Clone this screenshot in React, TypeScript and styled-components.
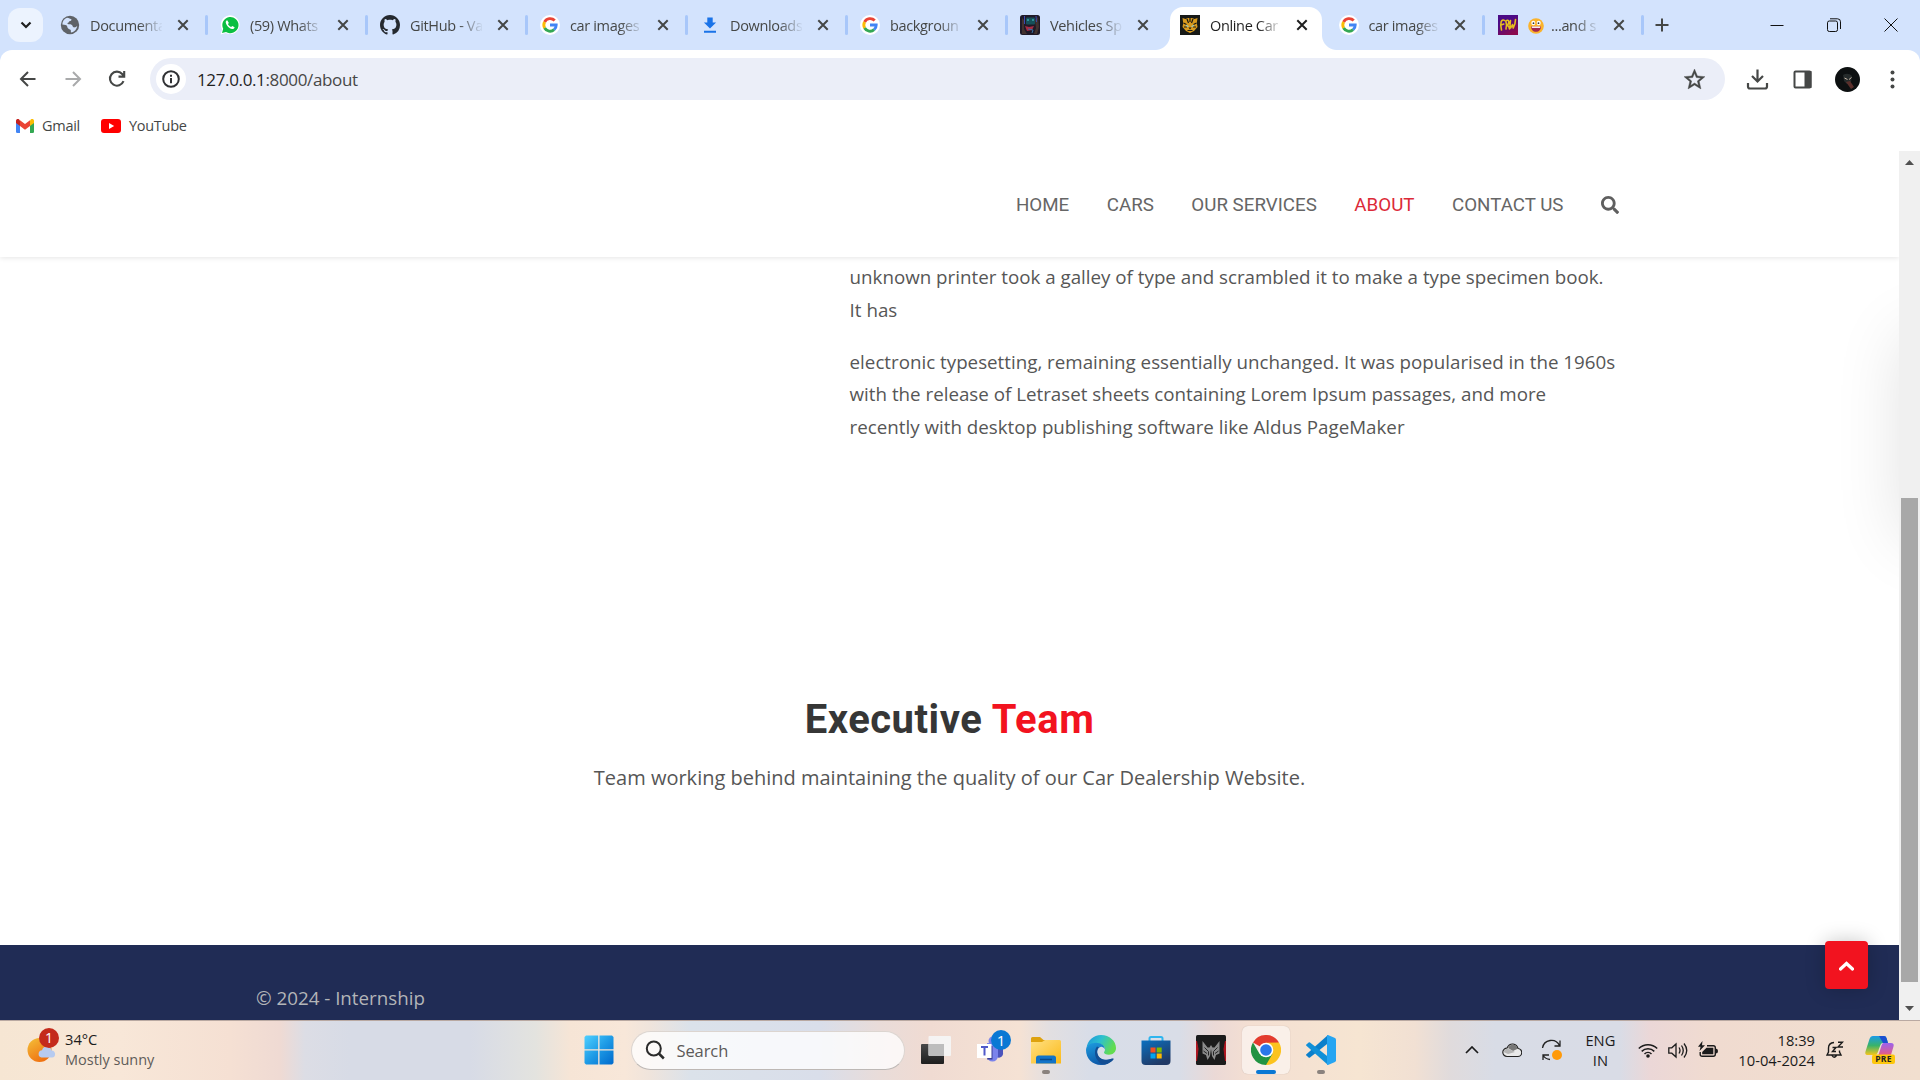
import React from "react";
import styled, { createGlobalStyle, css } from "styled-components";

const Global = createGlobalStyle`
  * { box-sizing: border-box; }
  html, body { margin: 0; padding: 0; background: #fff; overflow: hidden; }
  svg { display: block; flex: none; }
`;

const ui = `"Segoe UI", "Open Sans", "Noto Sans", sans-serif`;

const Screen = styled.div`
  width: 1920px;
  height: 1080px;
  display: flex;
  flex-direction: column;
  overflow: hidden;
  font-family: ${ui};
  color: #454746;
`;

/* ---------- tab strip ---------- */
const TabStrip = styled.div`
  height: 50px;
  flex: none;
  display: flex;
  align-items: stretch;
  background: #d3e3fd;
  padding-left: 8px;
`;
const TabSearch = styled.div`
  width: 35px;
  height: 34px;
  margin: 8px 3px 0 0;
  border-radius: 12px;
  background: #ecf3fe;
  display: flex;
  align-items: center;
  justify-content: center;
`;
const Tab = styled.div<{ $active?: boolean; $w: number }>`
  position: relative;
  width: ${(p) => p.$w}px;
  height: 50px;
  display: flex;
  align-items: center;
  padding-left: 14px;
  z-index: ${(p) => (p.$active ? 1 : 0)};
  ${(p) =>
    p.$active &&
    css`
      &::before {
        content: "";
        position: absolute;
        z-index: -1;
        left: 4px;
        right: 3px;
        top: 7px;
        bottom: 0;
        background: #fff;
        border-radius: 13px 13px 0 0;
      }
      &::after {
        content: "";
        position: absolute;
        z-index: -1;
        left: -11px;
        right: -12px;
        bottom: 0;
        height: 15px;
        background: radial-gradient(circle at 0 0, transparent 14.5px, #fff 15.5px) left / 15px 15px no-repeat,
          radial-gradient(circle at 100% 0, transparent 14.5px, #fff 15.5px) right / 15px 15px no-repeat;
      }
    `}
`;
const Favicon = styled.div`
  width: 20px;
  height: 20px;
  margin-right: 10px;
  flex: none;
`;
const TabTitle = styled.div<{ $active?: boolean; $w: number }>`
  width: ${(p) => p.$w}px;
  flex: none;
  white-space: nowrap;
  font-size: 14.5px;
  letter-spacing: -0.35px;
  line-height: 22px;
  padding-top: 2px;
  color: ${(p) => (p.$active ? "#1f1f1f" : "#454746")};
  mask-image: linear-gradient(90deg, #000 68%, transparent 102%);
`;
const TabClose = styled.div`
  margin-left: 14px;
  flex: none;
`;
const Separator = styled.div`
  width: 3px;
  height: 20px;
  margin-left: 15px;
  flex: none;
  border-radius: 2px;
  background: #a8c7fa;
`;
const NewTab = styled.div`
  display: flex;
  align-items: center;
  margin-left: 13px;
`;
const WindowButtons = styled.div`
  margin-left: auto;
  display: flex;
  align-items: center;
  gap: 43px;
  padding: 0 22px 1px 0;
`;

/* ---------- toolbar ---------- */
const ToolbarBack = styled.div`
  background: #d3e3fd;
  flex: none;
`;
const Toolbar = styled.div`
  height: 55px;
  background: #fff;
  border-radius: 12px 12px 0 0;
  display: flex;
  align-items: center;
  padding: 3px 0 0 18px;
`;
const NavIcons = styled.div`
  display: flex;
  gap: 24.5px;
  width: 132px;
`;
const Omnibox = styled.div`
  width: 1575px;
  height: 42px;
  border-radius: 21px;
  background: #ebeef8;
  display: flex;
  align-items: center;
  padding: 0 18px 0 6px;
`;
const SiteInfo = styled.div`
  width: 30px;
  height: 30px;
  border-radius: 50%;
  background: #fff;
  display: flex;
  align-items: center;
  justify-content: center;
  margin-right: 11px;
`;
const Url = styled.div`
  flex: 1;
  font-size: 17px;
  letter-spacing: -0.36px;
  color: #474747;
  span { color: #1f1f1f; }
`;
const ToolbarActions = styled.div`
  display: flex;
  align-items: center;
  gap: 20px;
  margin-left: 20px;
`;
const Bookmarks = styled.div`
  height: 46px;
  flex: none;
  display: flex;
  align-items: center;
  padding: 0 0 5px 16px;
`;
const Bookmark = styled.div`
  display: flex;
  align-items: center;
  gap: 8px;
  margin-right: 21px;
  font-size: 14.5px;
  letter-spacing: -0.28px;
`;

/* ---------- page ---------- */
const Viewport = styled.div`
  height: 869px;
  flex: none;
  display: flex;
`;
const Page = styled.div`
  position: relative;
  width: 1899px;
  overflow: hidden;
  display: flex;
  flex-direction: column;
`;
const SiteHeader = styled.header`
  height: 106px;
  flex: none;
  display: flex;
  align-items: center;
  justify-content: flex-end;
  padding: 2px 280px 0 0;
  background: #fff;
  box-shadow: 0 1px 5px rgba(0, 0, 0, 0.1);
`;
const Menu = styled.nav`
  display: flex;
  align-items: center;
  gap: 37.5px;
`;
const MenuLink = styled.a<{ $active?: boolean }>`
  font: 400 18.75px/24px Roboto, sans-serif;
  color: ${(p) => (p.$active ? "#dc2a38" : "#666")};
  white-space: nowrap;
`;
const Copy = styled.section`
  width: 770px;
  margin: 4px 0 0 849.6px;
  height: 402px;
  p {
    margin: 0 0 19.5px;
    font: 400 18.75px/32.5px "Open Sans", sans-serif;
    color: #565656;
  }
`;
const Team = styled.section`
  flex: 1;
  text-align: center;
  padding-top: 31px;
`;
const TeamTitle = styled.h2`
  margin: 0;
  font: 700 40px/52px Roboto, sans-serif;
  letter-spacing: 0.5px;
  color: #363636;
  span { color: #f2131f; }
`;
const TeamText = styled.p`
  margin: 16px 0 0;
  font: 400 20px/32px "Open Sans", sans-serif;
  color: #565656;
`;
const Footer = styled.footer`
  height: 75px;
  flex: none;
  padding: 36px 0 0 256px;
  background: #202c55;
  font: 400 18.75px/34px "Open Sans", sans-serif;
  color: #b3b5b8;
`;
const DrawerShadow = styled.div`
  position: absolute;
  left: 1902px;
  top: 184px;
  width: 200px;
  height: 205px;
  box-shadow: 0 0 64px rgba(0, 0, 0, 0.12);
`;
const BackToTop = styled.div`
  position: absolute;
  left: 1825px;
  top: 790px;
  width: 43px;
  height: 48px;
  border-radius: 4px;
  background: #f2131f;
  box-shadow: 0 0 20px rgba(0, 0, 0, 0.22);
  display: flex;
  align-items: center;
  justify-content: center;
  padding-top: 2px;
`;
const ScrollTrack = styled.div`
  width: 21px;
  background: #f0f0f0;
  display: flex;
  flex-direction: column;
  align-items: center;
  padding-top: 9px;
`;
const ScrollThumb = styled.div`
  width: 17px;
  height: 484px;
  margin: 333px 0 24px;
  background: #a8a8a8;
`;

/* ---------- taskbar ---------- */
const Taskbar = styled.div`
  height: 60px;
  flex: none;
  display: flex;
  align-items: center;
  padding-bottom: 1px;
  border-top: 1px solid #b9a9a2;
  background: linear-gradient(
    90deg,
    #f6e6d3 0, #f8e7d8 120px, #f5e0d3 230px, #efdad3 280px, #dcdde5 305px, #d7dbe6 350px, #d7dbe6 470px,
    #e3e3df 535px, #f6e5d6 570px, #f8e7d9 625px, #efe4dc 650px, #dbe2ea 690px, #d9deea 820px, #e9dcd9 880px,
    #f0dbd2 930px, #f5e2d4 1020px, #e2dfe1 1050px, #d8dde8 1090px, #d9dde7 1180px, #ebd9d6 1215px, #f4dfd2 1250px, #f6e5d2 1360px,
    #f1e0d3 1415px, #e0dbdc 1450px, #d8dce6 1495px, #d9dce6 1620px, #ebd7d7 1650px, #f0dbd0 1710px, #f1dfcf 1920px
  );
`;
const Weather = styled.div`
  display: flex;
  width: 584px;
  padding: 0 0 1px 27px;
  gap: 4px;
  align-items: center;
`;
const Lines = styled.div<{ $align?: string }>`
  font-size: 14.7px;
  line-height: 20px;
  text-align: ${(p) => p.$align || "left"};
  color: #1b1b1b;
  white-space: nowrap;
  em { font-style: normal; font-size: 14.5px; color: #5f5c59; }
`;
const SearchBox = styled.div`
  width: 274px;
  height: 39px;
  margin: 0 3px 0 17px;
  border-radius: 20px;
  border: 1px solid #dcd5d0;
  border-bottom-color: #bdb8b5;
  background: rgba(255, 255, 255, 0.78);
  display: flex;
  align-items: center;
  gap: 11.5px;
  padding-left: 13px;
  font-size: 16.5px;
  letter-spacing: -0.1px;
  color: #5c5a59;
`;
const Slot = styled.div`
  width: 55px;
  height: 58px;
  display: flex;
  align-items: center;
  justify-content: center;
`;
const Tile = styled.div<{ $open?: boolean; $current?: boolean }>`
  position: relative;
  width: 48px;
  height: 48px;
  border-radius: 6px;
  display: flex;
  align-items: center;
  justify-content: center;
  background: ${(p) => (p.$current ? "rgba(255,255,255,.5)" : "none")};
  box-shadow: ${(p) => (p.$current ? "0 0 1px rgba(0,0,0,.25)" : "none")};
  &::after {
    content: "";
    display: ${(p) => (p.$open || p.$current ? "block" : "none")};
    position: absolute;
    bottom: 0;
    width: ${(p) => (p.$current ? 20 : 8)}px;
    height: 4px;
    border-radius: 2px;
    background: ${(p) => (p.$current ? "#0a78d4" : "#8a827e")};
  }
`;
const TeamsSlot = styled(Slot)`
  padding: 0 0 6px 7px;
`;
const Tray = styled.div`
  margin-left: auto;
  display: flex;
  align-items: center;
  padding-right: 25px;
`;
const Spacer = styled.div<{ $w: number }>`
  width: ${(p) => p.$w}px;
  flex: none;
`;

/* ---------- icons ---------- */
const Cross = ({ c = "#454746" }: { c?: string }) => (
  <svg width="14" height="14" viewBox="0 0 14 14" stroke={c} strokeWidth="2">
    <path d="M2.300 2.300l9.400 9.400M11.700 2.300L2.300 11.700" />
  </svg>
);
const Globe = () => (
  <svg width="20" height="20" viewBox="0 0 20 20">
    <circle cx="10" cy="10" r="9.200" fill="#5f6368" />
    <path d="M7 2.700c2 .2 2.300 1 4 1.200 1 .2.4 2-.8 2.100-1.500.1-1 1.500-2.200 1.800-1 .3-.6 1.600.6 1.500 2-.2 3.600.3 4 1.800.4 1.600 1.500 1.400 2.600 1.200 1-.2 1.800-1 2-1.500-.2 3-2.600 6.400-6.200 6.800-.4-1.200 .4-2.200-.8-3-1.400-.8-2.800-1-3-3.200-.1-1.400-2.600-1.500-4.900-1.800C2.400 6.200 4.200 3.700 7 2.700z" fill="#d3e3fd" />
  </svg>
);
const WhatsApp = () => (
  <svg width="20" height="20" viewBox="0 0 20 20">
    <path d="M.6 19.400l1.400-5A9.400 9.400 0 1 1 5.700 18z" fill="#fff" />
    <path d="M2 18l1.200-4.200A8.100 8.100 0 1 1 6 16.900z" fill="#0bbf42" />
    <path d="M7.200 5.300c-.9.300-1.700 1.200-1.400 2.500.6 2.800 3.300 5.700 6.300 6.200 1.300.2 2.400-.7 2.500-1.800l-2.300-1.300-1.200 1.200c-1.500-.6-2.500-1.600-3.200-3l1-1.200z" fill="#fff" />
  </svg>
);
const GitHub = () => (
  <svg width="20" height="20" viewBox="0 0 16 16">
    <path fill="#24292f" d="M8 0C3.580 0 0 3.580 0 8c0 3.540 2.290 6.530 5.470 7.590.4.070.55-.17.55-.38 0-.19-.01-.82-.01-1.490-2.010.37-2.530-.49-2.690-.94-.09-.23-.48-.94-.82-1.130-.28-.15-.68-.52-.01-.53.63-.01 1.080.58 1.230.82.72 1.210 1.870.87 2.330.66.07-.52.28-.87.51-1.070-1.780-.2-3.640-.89-3.640-3.950 0-.87.31-1.590.82-2.150-.08-.2-.36-1.020.08-2.120 0 0 .67-.21 2.200.82.64-.18 1.320-.27 2-.27s1.360.09 2 .27c1.530-1.040 2.200-.82 2.200-.82.44 1.100.16 1.920.08 2.120.51.56.82 1.270.82 2.150 0 3.070-1.870 3.750-3.650 3.950.29.25.54.73.54 1.480 0 1.070-.01 1.930-.01 2.200 0 .21.15.46.55.38A8.010 8.010 0 0 0 16 8c0-4.420-3.580-8-8-8z" />
  </svg>
);
const Google = () => (
  <svg width="20" height="20" viewBox="0 0 20 20" fill="none" strokeWidth="2.900">
    <circle cx="10" cy="10" r="10" fill="#fff" />
    <path d="M14.700 5.600A6.200 6.200 0 0 0 4.600 7" stroke="#ea4335" />
    <path d="M4.600 7a6.300 6.300 0 0 0 0 6" stroke="#fbbc05" />
    <path d="M4.600 13a6.200 6.200 0 0 0 9.500 1.700" stroke="#34a853" />
    <path d="M14.100 14.700A6 6 0 0 0 16.200 10H10" stroke="#4285f4" />
  </svg>
);
const DownloadFav = () => (
  <svg width="20" height="20" viewBox="0 0 20 20" fill="#1a73e8">
    <path d="M7.300 2.500h5.400v5h3.400L10 13.600 3.900 7.500h3.400zM4 15.700h12v2H4z" />
  </svg>
);
const Robot = () => (
  <svg width="20" height="20" viewBox="0 0 20 20">
    <rect width="20" height="20" rx="2.500" fill="#1f1a28" />
    <path d="M2 3l2 2v9l3 5H2zM18 2l-3 3 1 8-2 6h3l2-7z" fill="#43322f" />
    <rect x="6" y="2.500" width="9" height="7" rx="1" fill="#16505a" />
    <path d="M7 5h2M12 5h2" stroke="#3aa2a8" strokeWidth="1.300" />
    <path d="M4.500 1v8M16 1l.5 6" stroke="#3b4ab0" strokeWidth="1" />
    <path d="M5 11l4 1 5-1-2 4-5 1z" fill="#a72c43" />
    <path d="M8 14l5 1-1 3" stroke="#386fa0" fill="none" />
  </svg>
);
const Tiger = () => (
  <svg width="20" height="20" viewBox="0 0 20 20">
    <rect width="20" height="20" fill="#171917" />
    <path d="M2.500 3l3 1L8 3h4l2.500 1 3-1-.7 5 .7 4-3.500 4L10 18l-4-2-3.500-4 .7-4z" fill="#d99a1d" />
    <path d="M7 4l1.500 4M13 4l-1.500 4M10 3v4M3.500 8l3 1.500M16.500 8l-3 1.500M4 12l3 0M16 12l-3 0M7.500 15.500h5" stroke="#171917" strokeWidth="1.200" />
    <path d="M6 10.500l2.500 1M14 10.500l-2.500 1" stroke="#8fd0d8" strokeWidth="1.200" />
    <path d="M8.500 12.500h3L10 14.500z" fill="#171917" />
  </svg>
);
const Graffiti = () => (
  <svg width="20" height="20" viewBox="0 0 20 20">
    <defs>
      <linearGradient id="gr" x1="0" y1="0" x2=".6" y2="1">
        <stop offset=".4" stopColor="#4b0a86" />
        <stop offset="1" stopColor="#8a0a4e" />
      </linearGradient>
    </defs>
    <rect width="20" height="20" fill="url(#gr)" />
    <path d="M3.500 15Q2 10 3.200 6.500Q5 4 6.500 5.500M3 10l2.800-1M8 14Q9 9 7.800 6c3-2.500 4.500 2 1 4.500 1.500 0 2.500 1.500 2.700 3.500M12.500 5.500Q11.500 10 12.700 13l1.800-3.500.7 3.500Q17.500 9 17.500 4.500" fill="none" stroke="#e6bf1e" strokeWidth="1.600" strokeLinejoin="round" strokeLinecap="round" />
  </svg>
);
const Grin = styled.svg`
  display: inline-block;
  vertical-align: -3px;
  margin-right: 7px;
`;
const GrinFace = () => (
  <Grin width="16" height="16" viewBox="0 0 16 16">
    <circle cx="8" cy="8" r="7.800" fill="#fbb32c" />
    <ellipse cx="5.300" cy="5" rx="2" ry="2.300" fill="#fff" />
    <ellipse cx="10.700" cy="5" rx="2" ry="2.300" fill="#fff" />
    <circle cx="5.500" cy="5.200" r=".9" fill="#333" />
    <circle cx="10.500" cy="5.200" r=".9" fill="#333" />
    <path d="M3 8.500h10c0 3-2 5.300-5 5.300s-5-2.300-5-5.300z" fill="#a3264d" />
    <path d="M3.800 8.500h8.400v1.400H3.800z" fill="#fff" />
  </Grin>
);

type TabData = { icon: React.ReactNode; title: React.ReactNode; w?: number; tw?: number; active?: boolean; bar?: boolean };
const tabs: TabData[] = [
  { icon: <Globe />, title: "Documenta", bar: true },
  { icon: <WhatsApp />, title: "(59) Whats", bar: true },
  { icon: <GitHub />, title: "GitHub - Va", bar: true },
  { icon: <Google />, title: "car images", bar: true },
  { icon: <DownloadFav />, title: "Downloads", bar: true },
  { icon: <Google />, title: "backgroun", bar: true },
  { icon: <Robot />, title: "Vehicles Sp" },
  { icon: <Tiger />, title: "Online Car", w: 158.5, tw: 70.5, active: true },
  { icon: <Google />, title: "car images", w: 159.5, tw: 70.5, bar: true },
  { icon: <Graffiti />, title: <><GrinFace />...and s</>, w: 158, tw: 70, bar: true },
];

const Start = () => (
  <svg width="30" height="30" viewBox="0 0 30 30">
    <defs>
      <linearGradient id="win" x1="0" y1="0" x2="1" y2="1">
        <stop offset="0" stopColor="#4fd0ff" />
        <stop offset=".5" stopColor="#1e9be6" />
        <stop offset="1" stopColor="#0069cc" />
      </linearGradient>
    </defs>
    <path fill="url(#win)" d="M2 .5h12.200v13.800H.5V2zM15.500.5H28l1.500 1.500v12.300h-14zM.5 15.600h13.700v13.900H2L.5 28zM15.500 15.600h14V28L28 29.500H15.500z" />
  </svg>
);
const TaskView = () => (
  <svg width="30" height="30" viewBox="0 0 30 30">
    <defs>
      <linearGradient id="tv" x1="0" y1="0" x2="0" y2="1">
        <stop offset="0" stopColor="#484848" /><stop offset="1" stopColor="#1e1e1e" />
      </linearGradient>
    </defs>
    <rect x="0" y="9" width="23" height="20" rx="1" fill="url(#tv)" />
    <rect x="7.500" y="1" width="22.500" height="20" rx="1" fill="#f5f5f5" fillOpacity=".92" />
    <path d="M7.500 9H23v12H8.500l-1-1z" fill="#bdbdbd" />
  </svg>
);
const Teams = () => (
  <svg width="36" height="36" viewBox="0 0 36 36">
    <path d="M19 16h8v7.500a4 4 0 0 1-8 2z" fill="#4b53bc" />
    <circle cx="17" cy="12" r="4.500" fill="#7b83eb" />
    <path d="M11 14h11v13a5.500 5.500 0 0 1-11 0z" fill="#7b83eb" />
    <path d="M15 17h1.500v13.500H11z" fill="#3b3f99" />
    <rect x="1" y="15" width="14.500" height="14" fill="#fff" />
    <path d="M5 18h7M8.500 18v8.500" stroke="#5059c9" strokeWidth="2" />
    <circle cx="25" cy="11" r="10" fill="#0a78d4" />
    <text x="25" y="16.500" fontSize="15" textAnchor="middle" fill="#fff" fontFamily="Open Sans">1</text>
  </svg>
);
const Explorer = () => (
  <svg width="30" height="30" viewBox="0 0 30 30">
    <defs><linearGradient id="fo" x1="0" y1="0" x2="1" y2="1"><stop offset="0" stopColor="#ffe083" /><stop offset="1" stopColor="#fbba19" /></linearGradient></defs>
    <path d="M0 3.500Q0 2 1.500 2H9l3.500 3H28v5H0z" fill="#dea20f" />
    <path d="M0 7h11l3-2h14.500Q30 5 30 6.500v22H0z" fill="url(#fo)" />
    <path d="M5 28.500V23q0-2.500 2.500-2.500h15Q25 20.500 25 23v5.500z" fill="#1274c8" />
    <path d="M9 24.500h12" stroke="#094a8c" strokeWidth="1.500" />
  </svg>
);
const Edge = () => (
  <svg width="30" height="30" viewBox="0 0 30 30">
    <defs>
      <linearGradient id="e1" x1="0" y1="0" x2="1" y2=".4"><stop offset="0" stopColor="#1b91dc" /><stop offset=".5" stopColor="#2dc0cf" /><stop offset="1" stopColor="#62dc50" /></linearGradient>
      <linearGradient id="e2" x1="0" y1="0" x2=".4" y2="1"><stop offset="0" stopColor="#1e9de0" /><stop offset="1" stopColor="#0d58a8" /></linearGradient>
    </defs>
    <path d="M.5 13C1.500 5.500 7.500 0 15 0c8.500 0 15 6 15 13 0 4-3 6.700-7 6.700-3.300 0-5-1-5-2.200 0-.8 1-1.300 1-3.200C19 11 15.500 8.500 11 8.500 6 8.500 2 10.500.5 13z" fill="url(#e1)" />
    <path d="M0 15c0-4.500 5-7.300 10-7.300 5.500 0 9 3.200 9 6.800-1-2-3-3-4.500-2.500-3 1-4 4-3 7 1.500 5 7 7.500 14 4.800 1-.4 2 .3 1.200 1.200C24 28 20 30 15 30 6.500 30 0 23.500 0 15z" fill="url(#e2)" />
    <path d="M11 11.500C7 16 9 26 16.500 29.500 20 30 25 27.500 27.500 24.500c.5-1-.2-1.300-1-1-7 3-13.500.8-15-4.500-.8-2.500-.3-5 1.500-6.500z" fill="#134e94" />
  </svg>
);
const Store = () => (
  <svg width="30" height="30" viewBox="0 0 30 30">
    <defs><linearGradient id="st" x1="0" y1="0" x2=".5" y2="1"><stop offset="0" stopColor="#0b70c0" /><stop offset="1" stopColor="#213a66" /></linearGradient></defs>
    <path d="M8.500 7V3.500Q8.500 2 10 2h10q1.500 0 1.500 1.500V7" fill="none" stroke="#2fb5ee" strokeWidth="2" />
    <path d="M.5 5.500h29V26q0 4-4 4h-21q-4 0-4-4z" fill="url(#st)" />
    <path d="M9.500 12.500h5v5h-5z" fill="#f25022" /><path d="M15.700 12.500h5v5h-5z" fill="#7fba00" />
    <path d="M9.500 18.500h5v5h-5z" fill="#00a4ef" /><path d="M15.700 18.500h5v5h-5z" fill="#ffb900" />
  </svg>
);
const Predator = () => (
  <svg width="30" height="30" viewBox="0 0 30 30">
    <rect width="30" height="30" rx="1.500" fill="#1b1b1b" />
    <path d="M.5 6L2 14 .5 26zM29.500 6L28 14l1.500 12z" stroke="#b01620" fill="#b01620" />
    <path d="M6.500 6l5 6.500h2L15 10l1.500 2.500h2l5-6.500v12.500L20 20l-1.500 5-2.500-4-1-7-1 7-2.500 4L10 20l-3.500-1.500z" fill="#8b8b8b" />
    <path d="M8.500 12.500l4 4v4M21.500 12.500l-4 4v4M7.500 16l3.500 2.500M22.500 16L19 18.500" stroke="#262626" fill="none" />
  </svg>
);
const Chrome = () => (
  <svg width="30" height="30" viewBox="0 0 30 30">
    <path d="M15 15L2 7.500A15 15 0 0 1 28 7.500z" fill="#e33b2e" />
    <path d="M15 15V7.500h13A15 15 0 0 1 15 30z" fill="#fcc31e" />
    <path d="M15 15l6.500 3.800L15 30A15 15 0 0 1 2 7.500l6.500 11.300z" fill="#229342" />
    <path d="M2 7.500h26L15 8z" fill="#e33b2e" />
    <circle cx="15" cy="15" r="7.300" fill="#fff" /><circle cx="15" cy="15" r="5.800" fill="#2a77ea" />
  </svg>
);
const Code = () => (
  <svg width="30" height="30" viewBox="0 0 30 30">
    <path d="M22 0v8.200L4 22.500q-.7.500-1.400 0L.4 20.600q-.7-.7 0-1.400z" fill="#0b7fcb" />
    <path d="M22 30v-8.200L4 7.500q-.7-.5-1.400 0L.4 9.400q-.7.700 0 1.400z" fill="#1190d8" />
    <path d="M22 0l7 3q1 .5 1 1.700v20.600q0 1.200-1 1.700l-7 3q-1 .2-1-1V1q0-1.200 1-1z" fill="#26a5f2" />
  </svg>
);

export default function App() {
  return (
    <Screen>
      <Global />
      <TabStrip>
        <TabSearch>
          <svg width="12" height="8" viewBox="0 0 12 8" fill="none" stroke="#1f1f1f" strokeWidth="2.200"><path d="M1.500 1.500L6 6l4.500-4.500" /></svg>
        </TabSearch>
        {tabs.map((t, i) => (
          <Tab key={i} $w={t.w || 160} $active={t.active}>
            <Favicon>{t.icon}</Favicon>
            <TabTitle $active={t.active} $w={t.tw || 72}>{t.title}</TabTitle>
            <TabClose><Cross c={t.active ? "#1f1f1f" : undefined} /></TabClose>
            {t.bar && <Separator />}
          </Tab>
        ))}
        <NewTab>
          <svg width="14" height="14" viewBox="0 0 14 14" stroke="#454746" strokeWidth="2"><path d="M7 .5v13M.5 7h13" /></svg>
        </NewTab>
        <WindowButtons>
          <svg width="14" height="14" viewBox="0 0 14 14" stroke="#111"><path d="M.5 7.500h13" /></svg>
          <svg width="14" height="14" viewBox="0 0 14 14" stroke="#111" fill="none"><rect x=".5" y="3" width="10" height="10.500" rx="1.800" /><path d="M3 .8h7.500q3 0 3 3V11" /></svg>
          <svg width="14" height="14" viewBox="0 0 14 14" stroke="#111"><path d="M.5.5l13 13M13.500.5l-13 13" /></svg>
        </WindowButtons>
      </TabStrip>

      <ToolbarBack>
        <Toolbar>
          <NavIcons>
            <svg width="20" height="20" viewBox="0 0 20 20" fill="none" stroke="#454746" strokeWidth="2"><path d="M17.500 10H3.500M10 3l-7 7 7 7" /></svg>
            <svg width="20" height="20" viewBox="0 0 20 20" fill="none" stroke="#a9aaab" strokeWidth="2"><path d="M2.500 10h14M10 3l7 7-7 7" /></svg>
            <svg width="20" height="20" viewBox="0 0 20 20" fill="none" stroke="#454746" strokeWidth="2.100"><path d="M16.500 12.200A7 7 0 1 1 15.200 5l1.800 2M17.200 2v5.600h-5.700" /></svg>
          </NavIcons>
          <Omnibox>
            <SiteInfo>
              <svg width="18" height="18" viewBox="0 0 18 18" fill="none" stroke="#303134" strokeWidth="2"><circle cx="9" cy="9" r="7.800" /><path d="M9 8v5.200M9 4.700v2" /></svg>
            </SiteInfo>
            <Url><span>127.0.0.1</span>:8000/about</Url>
            <svg width="25" height="25" viewBox="0 0 24 24" fill="#454746" stroke="#454746" strokeWidth=".4"><path d="M22 9.240l-7.190-.62L12 2 9.190 8.630 2 9.240l5.460 4.730L5.820 21 12 17.270 18.180 21l-1.630-7.030L22 9.240zM12 15.400l-3.760 2.270 1-4.280-3.320-2.880 4.380-.38L12 6.100l1.710 4.040 4.380.38-3.320 2.880 1 4.280L12 15.400z" /></svg>
          </Omnibox>
          <ToolbarActions>
            <svg width="25" height="25" viewBox="0 0 25 25" fill="none" stroke="#454746" strokeWidth="2.200"><path d="M12.500 2.500v12M7 9l5.500 5.500L18 9M3 16v3.500q0 2 2 2h15q2 0 2-2V16" /></svg>
            <svg width="25" height="25" viewBox="0 0 25 25"><rect x="4.500" y="4.500" width="16" height="16" rx="1" fill="none" stroke="#454746" strokeWidth="2" /><path d="M14.500 4h7v17h-7z" fill="#454746" /></svg>
            <svg width="25" height="25" viewBox="0 0 25 25"><circle cx="12.500" cy="12.500" r="12.500" fill="#0d1011" /><path d="M8 8q5-3 9 1l-1 6-4 2-3-3z" fill="#262b2b" /><path d="M9.500 11l3 1.500M16.500 10.500l-2.500 2" stroke="#c9b9a9" /><path d="M11 15l4-1 4 6-3 2z" fill="#5a2f2b" /></svg>
            <svg width="25" height="25" viewBox="0 0 25 25" fill="#454746"><circle cx="12.500" cy="5.500" r="2" /><circle cx="12.500" cy="12.500" r="2" /><circle cx="12.500" cy="19.500" r="2" /></svg>
          </ToolbarActions>
        </Toolbar>
      </ToolbarBack>
      <Bookmarks>
        <Bookmark>
          <svg width="18" height="14" viewBox="0 0 18 14"><path d="M0 2v10.700Q0 14 1.300 14H4V5z" fill="#4285f4" /><path d="M18 2v10.700q0 1.300-1.300 1.300H14V5z" fill="#34a853" /><path d="M14 1.500V7l4-3V2c0-2-2-2.500-3.200-1.500z" fill="#fbbc04" /><path d="M4 1.300L9 5l5-3.700V7L9 10.700 4 7z" fill="#ea4335" /><path d="M0 2v2l4 3V1.500L3.200.5C2-.5 0 0 0 2z" fill="#c5221f" /></svg>
          Gmail
        </Bookmark>
        <Bookmark>
          <svg width="20" height="14" viewBox="0 0 20 14"><rect width="20" height="14" rx="3" fill="#f00" /><path d="M8 4l5.200 3L8 10z" fill="#fff" /></svg>
          YouTube
        </Bookmark>
      </Bookmarks>

      <Viewport>
        <Page>
          <SiteHeader>
            <Menu>
              <MenuLink>HOME</MenuLink>
              <MenuLink>CARS</MenuLink>
              <MenuLink>OUR SERVICES</MenuLink>
              <MenuLink $active>ABOUT</MenuLink>
              <MenuLink>CONTACT US</MenuLink>
              <svg width="18" height="18" viewBox="0 0 512 512" fill="#5f5f5f"><path d="M505 442.700L405.300 343c-4.500-4.500-10.600-7-17-7H372c27.600-35.300 44-79.700 44-128C416 93.100 322.900 0 208 0S0 93.100 0 208s93.100 208 208 208c48.300 0 92.700-16.400 128-44v16.300c0 6.400 2.500 12.500 7 17l99.700 99.700c9.400 9.400 24.600 9.400 33.900 0l28.300-28.300c9.400-9.400 9.400-24.600.1-34zM208 336c-70.700 0-128-57.200-128-128 0-70.700 57.200-128 128-128 70.700 0 128 57.200 128 128 0 70.700-57.200 128-128 128z" /></svg>
            </Menu>
          </SiteHeader>
          <Copy>
            <p>unknown printer took a galley of type and scrambled it to make a type specimen book. It has</p>
            <p>electronic typesetting, remaining essentially unchanged. It was popularised in the 1960s with the release of Letraset sheets containing Lorem Ipsum passages, and more recently with desktop publishing software like Aldus PageMaker</p>
          </Copy>
          <Team>
            <TeamTitle>Executive <span>Team</span></TeamTitle>
            <TeamText>Team working behind maintaining the quality of our Car Dealership Website.</TeamText>
          </Team>
          <Footer>© 2024 - Internship</Footer>
          <DrawerShadow />
          <BackToTop>
            <svg width="15" height="10" viewBox="0 0 15 10" fill="none" stroke="#fff" strokeWidth="3.200"><path d="M1.500 8l6-5.500 6 5.500" strokeLinecap="round" /></svg>
          </BackToTop>
        </Page>
        <ScrollTrack>
          <svg width="9" height="5" viewBox="0 0 9 5" fill="#505050"><path d="M4.500 0L9 5H0z" /></svg>
          <ScrollThumb />
          <svg width="9" height="5" viewBox="0 0 9 5" fill="#505050"><path d="M0 0h9L4.500 5z" /></svg>
        </ScrollTrack>
      </Viewport>

      <Taskbar>
        <Weather>
          <svg width="34" height="44" viewBox="0 0 34 44">
            <defs><linearGradient id="sun" x1="0" y1="0" x2=".6" y2="1"><stop offset="0" stopColor="#f3c13a" /><stop offset="1" stopColor="#f07010" /></linearGradient></defs>
            <circle cx="12.500" cy="22" r="12" fill="url(#sun)" />
            <path d="M14.500 29.500a3.700 3.700 0 0 1 .5-7.300q1.500-4.200 5.500-3.500 3.500.5 4 3.800c4.500 0 5 7 .5 7z" fill="#b7cbf0" />
            <circle cx="22" cy="10" r="10" fill="#c42b1c" />
            <text x="22" y="15" fontSize="14" textAnchor="middle" fill="#fff" fontFamily="Open Sans">1</text>
          </svg>
          <Lines>34°C<br /><em>Mostly sunny</em></Lines>
        </Weather>
        <Start />
        <SearchBox>
          <svg width="20" height="20" viewBox="0 0 20 20" fill="none" stroke="#2b2b2b" strokeWidth="2"><circle cx="8.800" cy="8.500" r="7" /><path d="M13.800 13.500l5 5" strokeWidth="2.500" /></svg>
          Search
        </SearchBox>
        <Slot><TaskView /></Slot>
        <TeamsSlot><Teams /></TeamsSlot>
        <Slot><Tile $open><Explorer /></Tile></Slot>
        <Slot><Edge /></Slot>
        <Slot><Store /></Slot>
        <Slot><Predator /></Slot>
        <Slot><Tile $current><Chrome /></Tile></Slot>
        <Slot><Tile $open><Code /></Tile></Slot>
        <Tray>
          <svg width="14" height="8" viewBox="0 0 14 8" fill="none" stroke="#1b1b1b" strokeWidth="1.700"><path d="M1 7l6-6 6 6" /></svg>
          <Spacer $w={23} />
          <svg width="20" height="15" viewBox="0 0 20 15"><path d="M5 13.500a4.200 4.200 0 0 1 0-8.400Q7 .7 11 1q4 .5 5 4.500a4 4 0 0 1-.5 8z" fill="#e9e9e9" stroke="#222" strokeWidth="1.200" /><path d="M6 5Q7.500 1.500 11 1.500q3.500.5 4.600 4.200L11 8z" fill="#777" /><path d="M1.500 9Q2.500 5.500 6 5.500L13 9l-7 2z" fill="#b5b5b5" /></svg>
          <Spacer $w={19} />
          <svg width="22" height="22" viewBox="0 0 22 22" fill="none" stroke="#222" strokeWidth="1.300"><path d="M1.500 9A9 9 0 0 1 18.500 6.500M19 1.500v5.500h-5.500M8 16H2v5M2 16q2 4 7 4.500" /><circle cx="16" cy="16" r="5" fill="#ff9a0a" stroke="none" /></svg>
          <Spacer $w={22} />
          <Lines $align="center">ENG<br />IN</Lines>
          <Spacer $w={23} />
          <svg width="20" height="15" viewBox="0 0 20 15" fill="none" stroke="#1b1b1b" strokeWidth="1.500"><path d="M.8 5.500a13 13 0 0 1 18.400 0M3.700 8.400a9 9 0 0 1 12.600 0M6.500 11a5 5 0 0 1 7 0" /><circle cx="10" cy="13" r="1.800" fill="#1b1b1b" stroke="none" /></svg>
          <Spacer $w={10} />
          <svg width="20" height="17" viewBox="0 0 20 17" fill="none" stroke="#1b1b1b" strokeWidth="1.300"><path d="M.8 5.800h3L8 2v13l-4.200-3.800h-3zM11 5.500q2 3 0 6M13.500 3.500q3.500 5 0 10M16 1.500q5.500 7 0 14" /></svg>
          <Spacer $w={10} />
          <svg width="20" height="18" viewBox="0 0 20 18"><path d="M9 4.700h6.300q2 0 2 2v6.600q0 2-2 2H4.200q-2 0-2-2V11" fill="none" stroke="#1b1b1b" strokeWidth="1.400" /><path d="M8.500 6.700h6.800v6.600H4.200V11z" fill="#1b1b1b" /><path d="M17.800 7.500q2.200 0 2.200 2.500t-2.200 2.500z" fill="#1b1b1b" /><path d="M4.500 0L0 5.800h2.600L1.500 10 7 4.200H4z" fill="#1b1b1b" /></svg>
          <Spacer $w={20} />
          <Lines $align="right">18:39<br />10-04-2024</Lines>
          <Spacer $w={11} />
          <svg width="18" height="18" viewBox="0 0 18 18" fill="none" stroke="#1b1b1b" strokeWidth="1.400"><path d="M8 1.500Q2.500 2 2.500 7v4L1 14h14l-1.500-3V9.500M6 14.500q2 3.500 4.500 0M12 1.200h4.500L12 6h5M6.500 6.500h3.500l-3.500 4H10" /></svg>
          <Spacer $w={21} />
          <svg width="30" height="30" viewBox="0 0 30 30">
            <defs>
              <linearGradient id="c1" x1="0" y1="0" x2="0" y2="1"><stop offset="0" stopColor="#1a9be8" /><stop offset=".5" stopColor="#39b36a" /><stop offset="1" stopColor="#f6c51c" /></linearGradient>
              <linearGradient id="c2" x1="0" y1="0" x2="0" y2="1"><stop offset="0" stopColor="#9a63ee" /><stop offset="1" stopColor="#ef5a78" /></linearGradient>
            </defs>
            <path d="M8 1h11q2 0 2.500 2l1.500 5h-5q-2 0-2.600 2L12.500 18q-.6 2-2.500 2H3q-3.500 0-2.500-3.500L4.500 4Q5.500 1 8 1z" fill="url(#c1)" />
            <path d="M14 1h5q2 0 2.500 2L23 8h-5z" fill="#1b4fd0" />
            <path d="M18.500 8H26q3.500 0 2.500 3.500l-3 10H13l3.500-11q.6-2.500 2-2.500z" fill="url(#c2)" />
            <rect x="7" y="19.500" width="23" height="9.500" rx="2" fill="#fdc70c" />
            <text x="18.500" y="27.200" fontSize="8.500" fontWeight="700" textAnchor="middle" fill="#222" fontFamily="Open Sans" letterSpacing=".3">PRE</text>
          </svg>
        </Tray>
      </Taskbar>
    </Screen>
  );
}
